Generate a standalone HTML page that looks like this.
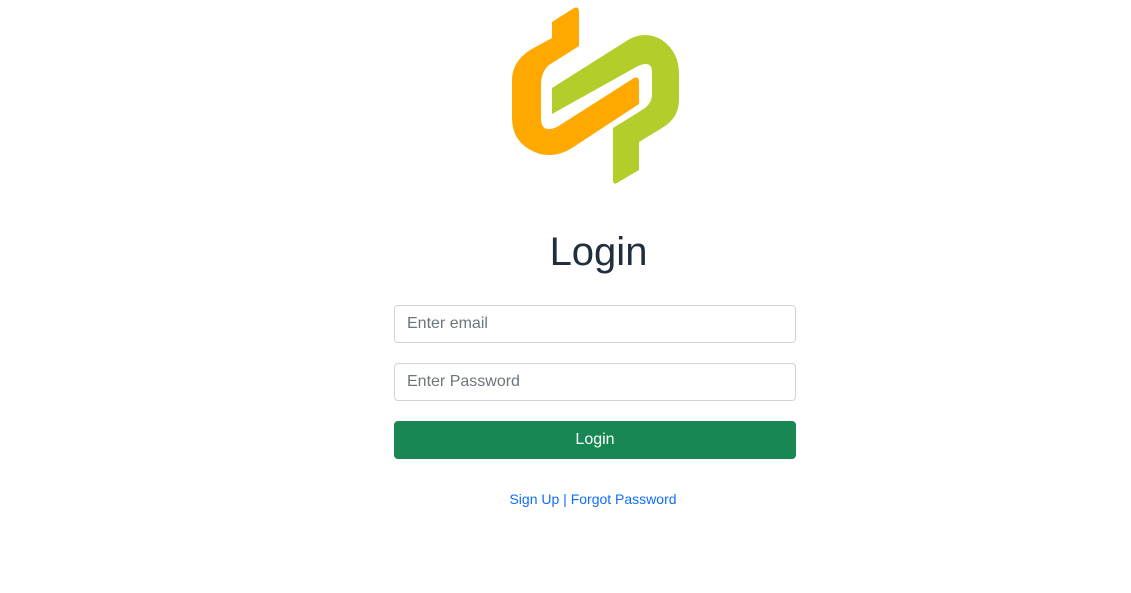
<!DOCTYPE html>
<html><head><meta charset="utf-8">
<style>
html,body{margin:0;padding:0;background:#fff;width:1131px;height:593px;overflow:hidden;font-family:"Liberation Sans",Arial,sans-serif;}
.logo{position:absolute;left:0;top:0}
h1{position:absolute;left:0;width:1197px;top:228px;margin:0;text-align:center;font-weight:400;font-size:40px;line-height:48px;color:#212f3d;}
.inp{position:absolute;left:394px;width:400px;height:36px;border:1px solid #ced4da;border-radius:4px;box-sizing:content-box;}
.inp span{position:absolute;left:12px;top:9px;font-size:16px;color:#6c757d;line-height:18px}
.btn{position:absolute;left:394px;top:421px;width:402px;height:38px;background:#198754;border-radius:4px;color:#fff;text-align:center;font-size:16px;line-height:38px}
.links{position:absolute;left:0;width:1186px;top:491px;text-align:center;font-size:14px;color:#0d6efd;line-height:16px}
</style></head><body>
<svg class="logo" width="1131" height="200" viewBox="0 0 1131 200">
<path fill="#ffa800" d="M552,22 L574,8 Q579,6 579,12 L579,46 L549,65 Q541,72 541,85 L541,118 Q541,134 557,127 L634,78 Q639,76 639,82 L639,104 L575,146 Q558,158 540,154 Q512,145 512,118 L512,80 Q512,62 530,50 L552,38 Z"/>
<path fill="#b3cd2b" d="M552,88 L628,40 Q645,30 662,40 Q679,52 679,74 L679,100 Q679,118 662,128 L639,142 L639,170 L617,183 Q613,185 613,180 L613,128 L642,110 Q652,104 652,94 L652,72 Q652,60 638,66 L552,114 Z"/>
</svg>
<h1>Login</h1>
<div class="inp" style="top:305px"><span>Enter email</span></div>
<div class="inp" style="top:363px"><span>Enter Password</span></div>
<div class="btn">Login</div>
<div class="links">Sign Up | Forgot Password</div>
</body></html>
